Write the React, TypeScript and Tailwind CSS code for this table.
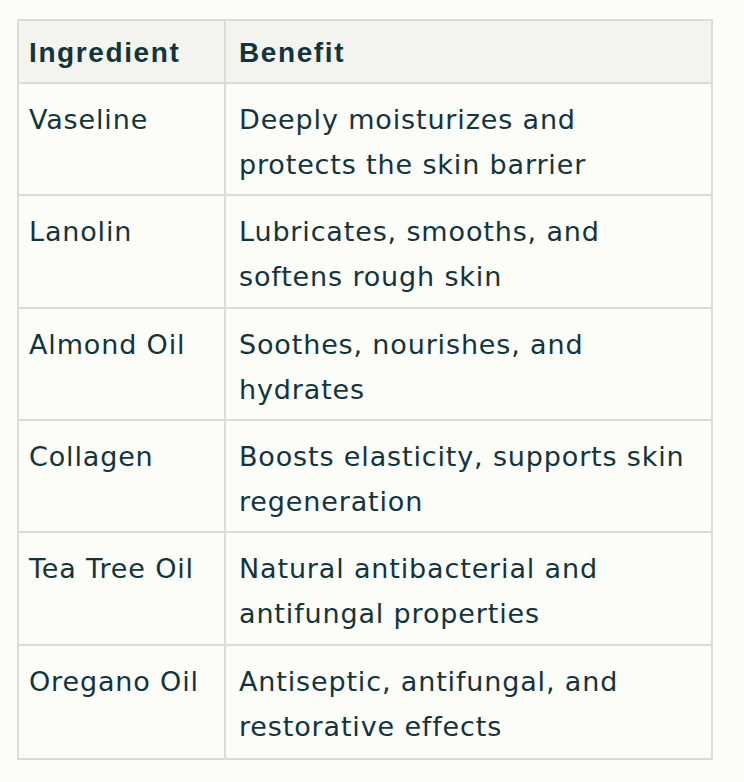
import React from "react";

const rows: { name: string; lines: [string, string] }[] = [
  { name: "Vaseline", lines: ["Deeply moisturizes and", "protects the skin barrier"] },
  { name: "Lanolin", lines: ["Lubricates, smooths, and", "softens rough skin"] },
  { name: "Almond Oil", lines: ["Soothes, nourishes, and", "hydrates"] },
  { name: "Collagen", lines: ["Boosts elasticity, supports skin", "regeneration"] },
  { name: "Tea Tree Oil", lines: ["Natural antibacterial and", "antifungal properties"] },
  { name: "Oregano Oil", lines: ["Antiseptic, antifungal, and", "restorative effects"] },
];

export default function App() {
  return (
    <div
      className="min-h-[782px] w-[744px] bg-[#fcfcf9] pt-[19px] pl-[17px] text-[#13343b]"
      style={{ fontFamily: '"DejaVu Sans", sans-serif' }}
    >
      <div className="w-[696px] border-2 border-[#dcdcd4] text-[27px] leading-[45px] tracking-[0.85px]">
        <div
          className="flex h-[63px] border-b-2 border-[#dcdcd4] bg-[#f3f3ef] text-[28px] font-bold tracking-[1.6px]"
          style={{ fontFamily: '"Liberation Sans", Arial, sans-serif' }}
        >
          <div className="w-[207px] shrink-0 border-r-2 border-[#dcdcd4] pl-[10px] pt-[9px]">Ingredient</div>
          <div className="flex-1 pl-[13px] pt-[9px]">Benefit</div>
        </div>
        {rows.map((r, i) => (
          <div
            key={r.name}
            className={
              "flex h-[112.33px] " + (i < rows.length - 1 ? "border-b-2 border-[#dcdcd4]" : "")
            }
          >
            <div className="w-[207px] shrink-0 border-r-2 border-[#dcdcd4] pl-[10px] pt-[13px]">
              {r.name}
            </div>
            <div className="flex-1 pl-[13px] pt-[13px]">
              <div className="whitespace-nowrap">{r.lines[0]}</div>
              <div className="whitespace-nowrap">{r.lines[1]}</div>
            </div>
          </div>
        ))}
      </div>
    </div>
  );
}
